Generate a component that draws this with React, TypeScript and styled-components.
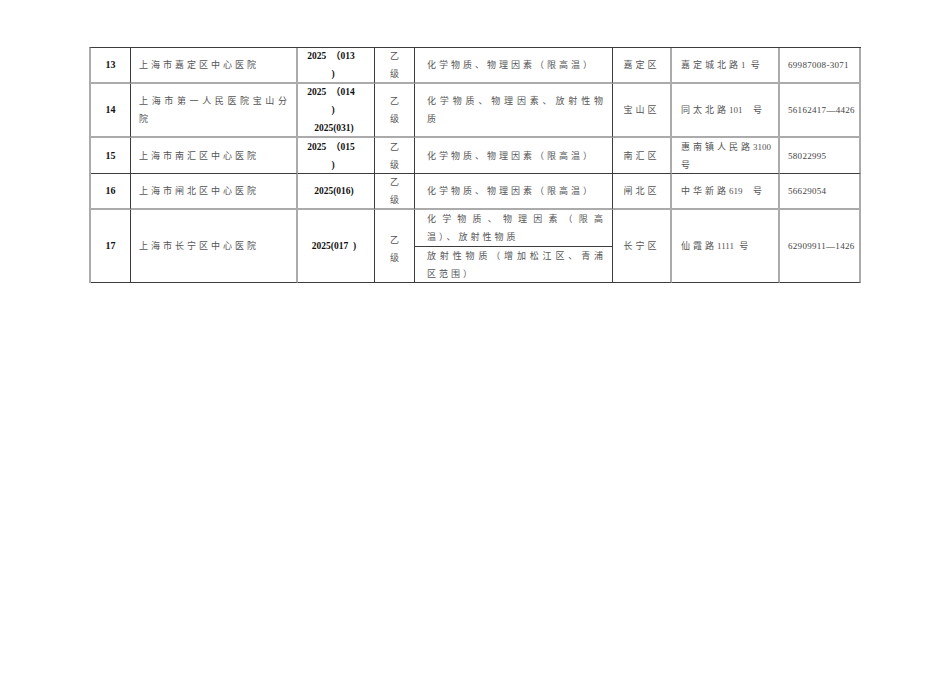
import { ReactNode } from "react";
import styled, { createGlobalStyle } from "styled-components";

const GlobalStyle = createGlobalStyle`
  html, body {
    margin: 0;
    padding: 0;
    background: #fff;
  }
  body {
    font-family: "Liberation Serif", "Noto Sans CJK SC", serif;
  }
`;

type LineKind = "dark" | "gray";

const line = (kind: LineKind) =>
  kind === "dark" ? "1px solid #3c3c3c" : "2px solid #ababab";

const Page = styled.div`
  width: 950px;
  height: 684px;
  box-sizing: border-box;
  padding: 47px 0 0 89px;
  background: #fff;
`;

const Table = styled.div`
  display: grid;
  grid-template-columns: 40px 167px 77px 40px 198px 59px 108px 81px;
  grid-template-rows: 36px 54px 36px 36px 73px;
  width: max-content;
  border-top: 1px solid #3c3c3c;
  border-left: 2px solid #ababab;
`;

const Cell = styled.div<{
  $right: LineKind;
  $bottom: LineKind;
  $align?: "left" | "center";
  $pad?: string;
}>`
  box-sizing: border-box;
  display: flex;
  flex-direction: column;
  justify-content: center;
  align-items: stretch;
  text-align: ${({ $align }) => $align ?? "left"};
  padding: ${({ $pad }) => $pad ?? "0"};
  border-right: ${({ $right }) => line($right)};
  border-bottom: ${({ $bottom }) => line($bottom)};
  font-size: 9px;
  line-height: 18px;
  min-width: 0;
`;

const Num = styled.span`
  font-family: "Liberation Serif", serif;
  font-weight: 700;
  font-size: 10px;
  color: #111;
`;

const Code = styled.span<{ $shift?: number }>`
  display: block;
  font-family: "Liberation Serif", "Noto Sans CJK SC", serif;
  font-weight: 700;
  font-size: 9.5px;
  color: #111;
  white-space: pre;
  padding-right: ${({ $shift }) => $shift ?? 0}px;
`;

const Han = styled.span<{ $justify?: boolean; $spacing?: number }>`
  display: block;
  font-family: "Liberation Serif", "Noto Sans CJK SC", serif;
  color: #555;
  letter-spacing: ${({ $spacing }) => $spacing ?? 3}px;
  white-space: pre;
  text-align: ${({ $justify }) => ($justify ? "justify" : "inherit")};
  text-align-last: ${({ $justify }) => ($justify ? "justify" : "auto")};
  ${({ $justify }) => ($justify ? "letter-spacing: 0; white-space: normal;" : "")}
`;

// latin digits inside Chinese text are not spaced out
const Lat = styled.span`
  letter-spacing: 0;
`;

const Level = styled.span`
  display: block;
  font-family: "Noto Sans CJK SC", sans-serif;
  font-size: 9px;
  color: #555;
`;

const Phone = styled.span`
  font-family: "Liberation Serif", serif;
  font-size: 9px;
  letter-spacing: 0.3px;
  color: #444;
`;

const Split = styled.div`
  box-sizing: border-box;
  display: flex;
  flex-direction: column;
  border-right: 1px solid #3c3c3c;
  border-bottom: 1px solid #3c3c3c;
  font-size: 9px;
  line-height: 18px;
`;

const SubCell = styled.div<{ $last?: boolean }>`
  flex: 1;
  display: flex;
  flex-direction: column;
  justify-content: center;
  padding: 0 9px 0 12px;
  border-bottom: ${({ $last }) => ($last ? "none" : "1px solid #3c3c3c")};
`;

type Row = {
  no: string;
  name: ReactNode;
  code: ReactNode;
  scope: ReactNode;
  district: string;
  address: ReactNode;
  phone: string;
  bottom: LineKind;
};

const rows: Row[] = [
  {
    no: "13",
    name: <Han>上海市嘉定区中心医院</Han>,
    code: (
      <>
        <Code $shift={10}>{"2025  （013"}</Code>
        <Code $shift={6}>)</Code>
      </>
    ),
    scope: <Han>化学物质、物理因素（限高温）</Han>,
    district: "嘉定区",
    address: (
      <Han>
        嘉定城北路<Lat>1</Lat> 号
      </Han>
    ),
    phone: "69987008-3071",
    bottom: "gray",
  },
  {
    no: "14",
    name: (
      <>
        <Han $justify>上海市第一人民医院宝山分</Han>
        <Han>院</Han>
      </>
    ),
    code: (
      <>
        <Code $shift={10}>{"2025  （014"}</Code>
        <Code $shift={6}>)</Code>
        <Code $shift={4}>2025(031)</Code>
      </>
    ),
    scope: (
      <>
        <Han $justify>化学物质、物理因素、放射性物</Han>
        <Han>质</Han>
      </>
    ),
    district: "宝山区",
    address: (
      <Han>
        同太北路<Lat>101</Lat>
        {"  "}号
      </Han>
    ),
    phone: "56162417—4426",
    bottom: "gray",
  },
  {
    no: "15",
    name: <Han>上海市南汇区中心医院</Han>,
    code: (
      <>
        <Code $shift={10}>{"2025  （015"}</Code>
        <Code $shift={6}>)</Code>
      </>
    ),
    scope: <Han>化学物质、物理因素（限高温）</Han>,
    district: "南汇区",
    address: (
      <>
        <Han>
          惠南镇人民路<Lat>3100</Lat>
        </Han>
        <Han>号</Han>
      </>
    ),
    phone: "58022995",
    bottom: "dark",
  },
  {
    no: "16",
    name: <Han>上海市闸北区中心医院</Han>,
    code: <Code $shift={4}>2025(016)</Code>,
    scope: <Han>化学物质、物理因素（限高温）</Han>,
    district: "闸北区",
    address: (
      <Han>
        中华新路<Lat>619</Lat>
        {"  "}号
      </Han>
    ),
    phone: "56629054",
    bottom: "gray",
  },
];

export default function App() {
  return (
    <Page>
      <GlobalStyle />
      <Table>
        {rows.map((r) => (
          <Row key={r.no} row={r} />
        ))}

        <Cell $right="dark" $bottom="dark" $align="center">
          <Num>17</Num>
        </Cell>
        <Cell $right="gray" $bottom="dark" $pad="0 9px 0 8px">
          <Han>上海市长宁区中心医院</Han>
        </Cell>
        <Cell $right="dark" $bottom="dark" $align="center">
          <Code $shift={4}>{"2025(017  )"}</Code>
        </Cell>
        <Cell $right="dark" $bottom="dark" $align="center" $pad="6px 0 0 0">
          <Level>乙</Level>
          <Level>级</Level>
        </Cell>
        <Split>
          <SubCell>
            <Han $justify>化学物质、物理因素（限高</Han>
            <Han>温）、放射性物质</Han>
          </SubCell>
          <SubCell $last>
            <Han $justify>放射性物质（增加松江区、青浦</Han>
            <Han>区范围）</Han>
          </SubCell>
        </Split>
        <Cell $right="gray" $bottom="dark" $align="center">
          <Han>长宁区</Han>
        </Cell>
        <Cell $right="gray" $bottom="dark" $pad="0 6px 0 9px">
          <Han>
            仙霞路<Lat>1111</Lat> 号
          </Han>
        </Cell>
        <Cell $right="gray" $bottom="dark" $pad="0 4px 0 8px">
          <Phone>62909911—1426</Phone>
        </Cell>
      </Table>
    </Page>
  );
}

function Row({ row }: { row: Row }) {
  const b = row.bottom;
  return (
    <>
      <Cell $right="dark" $bottom={b} $align="center">
        <Num>{row.no}</Num>
      </Cell>
      <Cell $right="gray" $bottom={b} $pad="0 9px 0 8px">
        {row.name}
      </Cell>
      <Cell $right="dark" $bottom={b} $align="center">
        {row.code}
      </Cell>
      <Cell $right="dark" $bottom={b} $align="center">
        <Level>乙</Level>
        <Level>级</Level>
      </Cell>
      <Cell $right="dark" $bottom={b} $pad="0 9px 0 12px">
        {row.scope}
      </Cell>
      <Cell $right="gray" $bottom={b} $align="center">
        <Han>{row.district}</Han>
      </Cell>
      <Cell $right="gray" $bottom={b} $pad="0 6px 0 9px">
        {row.address}
      </Cell>
      <Cell $right="gray" $bottom={b} $pad="0 4px 0 8px">
        <Phone>{row.phone}</Phone>
      </Cell>
    </>
  );
}
